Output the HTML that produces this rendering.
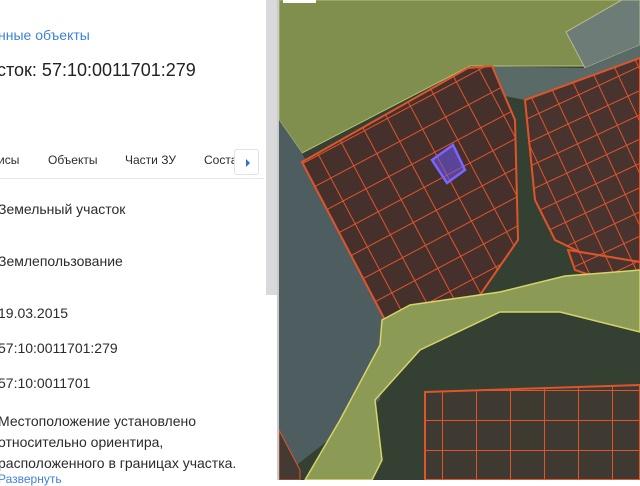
<!DOCTYPE html>
<html><head><meta charset="utf-8"><style>
body{margin:0;width:640px;height:480px;overflow:hidden;position:relative;background:#fff;font-family:"Liberation Sans","DejaVu Sans",sans-serif;}
.t{position:absolute;white-space:nowrap;color:#2b2b2b;font-size:14px;}
</style></head><body>
<div class="t" style="left:-2px;top:27px;color:#3f82d8;font-size:14px;">нные объекты</div>
<div class="t" style="left:-3px;top:60px;font-size:18px;color:#222;">сток: 57:10:0011701:279</div>
<div class="t" style="left:-2px;top:153px;font-size:12px;">исы</div>
<div class="t" style="left:48px;top:153px;font-size:12px;">Объекты</div>
<div class="t" style="left:125px;top:153px;font-size:12px;">Части ЗУ</div>
<div class="t" style="left:204px;top:153px;font-size:12px;">Соста</div>
<div style="position:absolute;left:234px;top:149px;width:25px;height:26px;background:#fff;border:1px solid #dde3ea;border-radius:3px;box-sizing:border-box;"><div style="position:absolute;left:11px;top:9px;width:0;height:0;border-left:4px solid #2f6fd0;border-top:4px solid transparent;border-bottom:4px solid transparent;"></div></div>
<div style="position:absolute;left:0;top:178px;width:264px;height:1px;background:#e6e9ee;"></div>
<div class="t" style="left:-2px;top:201px;">Земельный участок</div>
<div class="t" style="left:-2px;top:253px;">Землепользование</div>
<div class="t" style="left:-2px;top:305px;">19.03.2015</div>
<div class="t" style="left:-2px;top:340px;">57:10:0011701:279</div>
<div class="t" style="left:-2px;top:375px;">57:10:0011701</div>
<div class="t" style="left:-2px;top:411px;line-height:21px;">Местоположение установлено<br>относительно ориентира,<br>расположенного в границах участка.</div>
<div class="t" style="left:-2px;top:472px;color:#3f82d8;font-size:12px;">Развернуть</div>
<div style="position:absolute;left:266px;top:0;width:12px;height:295px;background:#d9d9db;"></div>
<div style="position:absolute;left:277px;top:0;width:2px;height:480px;background:#c8cacc;"></div>
<svg style="position:absolute;left:279px;top:0" width="361" height="480" viewBox="279 0 361 480">
<defs>
<pattern id="g" width="26" height="26" patternUnits="userSpaceOnUse" patternTransform="rotate(-28)"><rect width="26" height="26" fill="#45302c"/><path d="M0 0H26M0 0V26" stroke="#e0542c" stroke-width="2" fill="none"/></pattern>
<pattern id="g2" width="22" height="22" patternUnits="userSpaceOnUse" patternTransform="rotate(-25)"><rect width="22" height="22" fill="#48332f"/><path d="M0 0H22M0 0V22" stroke="#e0542c" stroke-width="2" fill="none"/></pattern>
<pattern id="g3" width="34" height="30" patternUnits="userSpaceOnUse"><rect width="34" height="30" fill="#3f3a31"/><path d="M0 0H34M0 0V30" stroke="#e0542c" stroke-width="2" fill="none"/></pattern>
</defs>
<rect x="279" y="0" width="361" height="480" fill="#334032"/>
<polygon points="279,0 622,0 566,32 585,66 470,66 302,153 279,120" fill="#808f4e" stroke="#b9c070" stroke-width="1"/>
<polygon points="566,32 622,0 640,0 640,45 585,68" fill="#6e7c78" stroke="#b4bc8a"/>
<polygon points="470,66 585,68 640,45 640,60 525,100 500,95" fill="#5a6a66"/>
<polygon points="279,120 302,153 385,318 380,400 303,460 279,480" fill="#4d5d60"/>
<polygon points="302,162 468,68 492,66 515,120 518,240 480,295 385,320" fill="url(#g)" stroke="#e0542c" stroke-width="2"/>
<polygon points="525,100 640,58 640,262 580,252 555,240 535,200" fill="url(#g2)" stroke="#e0542c" stroke-width="2"/>
<polygon points="568,250 640,262 640,292 575,270" fill="url(#g2)" stroke="#e0542c" stroke-width="2"/>
<polygon points="382,320 410,305 500,292 565,276 640,270 640,332 560,312 500,312 420,350 375,400 382,460 372,480 305,480 340,420 380,345" fill="#8b9a55" stroke="#d6d46a" stroke-width="1.5"/>
<polygon points="425,392 640,385 640,480 425,480" fill="url(#g3)" stroke="#e0542c" stroke-width="2"/>
<polygon points="279,430 300,470 300,480 279,480" fill="#443a33" stroke="#e0542c"/>
<polygon points="432,160 453,145 465,170 447,183" fill="#6c55ef" fill-opacity="0.55" stroke="#7a66ff" stroke-width="2.5"/>
<rect x="283" y="0" width="33" height="3" fill="#fff"/>
</svg>
</body></html>
